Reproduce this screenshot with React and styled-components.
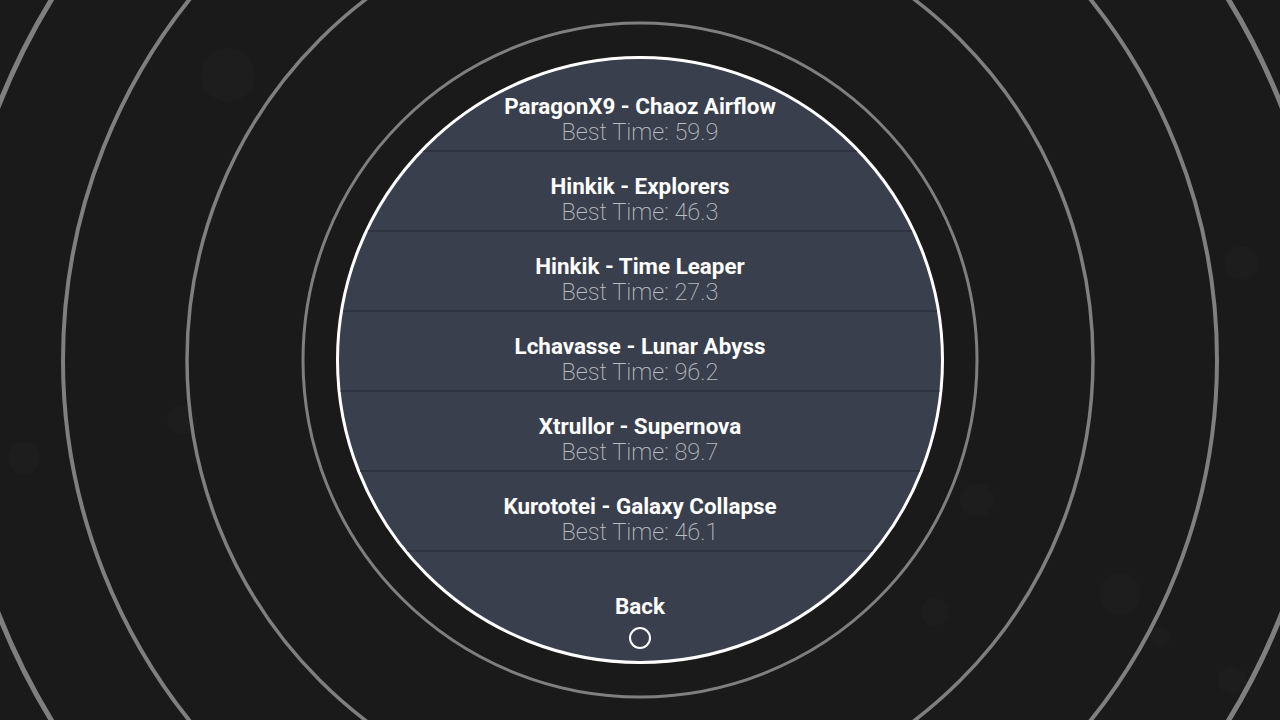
import React from 'react';
import styled, { createGlobalStyle } from 'styled-components';

const GlobalStyle = createGlobalStyle`
  html, body {
    margin: 0;
    padding: 0;
    background: #1a1a1a;
  }
  * {
    box-sizing: border-box;
  }
`;

const Stage = styled.div`
  position: relative;
  width: 1280px;
  height: 720px;
  overflow: hidden;
  background: #1a1a1a;
  display: flex;
  align-items: center;
  justify-content: center;
  font-family: Roboto, 'Liberation Sans', sans-serif;
`;

const Backdrop = styled.svg`
  position: absolute;
  inset: 0;
  z-index: 0;
`;

const Dial = styled.div`
  position: relative;
  z-index: 1;
  width: 608px;
  height: 608px;
  border-radius: 50%;
  border: 3px solid #ffffff;
  background: #3a3f4e;
  overflow: hidden;
  display: flex;
  flex-direction: column;
  padding-top: 13px;
`;

const Track = styled.div`
  display: flex;
  flex-direction: column;
  align-items: center;
  justify-content: flex-start;
  height: 80px;
  padding-top: 21px;
  border-bottom: 2px solid #2f333f;
`;

const Title = styled.div`
  color: #ffffff;
  font-size: 22.4px;
  font-weight: 700;
  line-height: 26px;
`;

const BestTime = styled.div`
  color: rgba(255, 255, 255, 0.66);
  font-size: 23.5px;
  font-weight: 200;
  line-height: 27px;
`;

const Footer = styled.div`
  display: flex;
  flex-direction: column;
  align-items: center;
  padding-top: 41px;
  gap: 8px;
`;

const BackLabel = styled.div`
  color: #ffffff;
  font-size: 22.4px;
  font-weight: 700;
  line-height: 26px;
`;

const Knob = styled.div`
  width: 22px;
  height: 22px;
  border-radius: 50%;
  border: 2px solid #ffffff;
`;

const tracks = [
  { title: 'ParagonX9 - Chaoz Airflow', time: '59.9' },
  { title: 'Hinkik - Explorers', time: '46.3' },
  { title: 'Hinkik - Time Leaper', time: '27.3' },
  { title: 'Lchavasse - Lunar Abyss', time: '96.2' },
  { title: 'Xtrullor - Supernova', time: '89.7' },
  { title: 'Kurototei - Galaxy Collapse', time: '46.1' },
];

const rings = [
  { r: 337, w: 3 },
  { r: 453, w: 3.5 },
  { r: 577, w: 4 },
  { r: 690, w: 5 },
];

const bubbles = [
  { x: 228, y: 75, r: 27 },
  { x: 977, y: 500, r: 17 },
  { x: 1120, y: 594, r: 21 },
  { x: 1160, y: 637, r: 10 },
  { x: 1241, y: 263, r: 17 },
  { x: 182, y: 420, r: 15 },
  { x: 24, y: 458, r: 16 },
  { x: 935, y: 612, r: 14 },
  { x: 1232, y: 680, r: 14 },
];

const App = () => {
  return (
    <>
      <GlobalStyle />
      <Stage>
        <Backdrop width="1280" height="720" viewBox="0 0 1280 720">
          {bubbles.map((b, i) => (
            <circle key={i} cx={b.x} cy={b.y} r={b.r} fill="#1d1d1d" />
          ))}
          {rings.map((ring) => (
            <circle
              key={ring.r}
              cx="640"
              cy="360"
              r={ring.r}
              fill="none"
              stroke="#7f7f7f"
              strokeWidth={ring.w}
            />
          ))}
        </Backdrop>

        <Dial>
          {tracks.map((t) => (
            <Track key={t.title}>
              <Title>{t.title}</Title>
              <BestTime>Best Time: {t.time}</BestTime>
            </Track>
          ))}
          <Footer>
            <BackLabel>Back</BackLabel>
            <Knob />
          </Footer>
        </Dial>
      </Stage>
    </>
  );
};

export default App;
